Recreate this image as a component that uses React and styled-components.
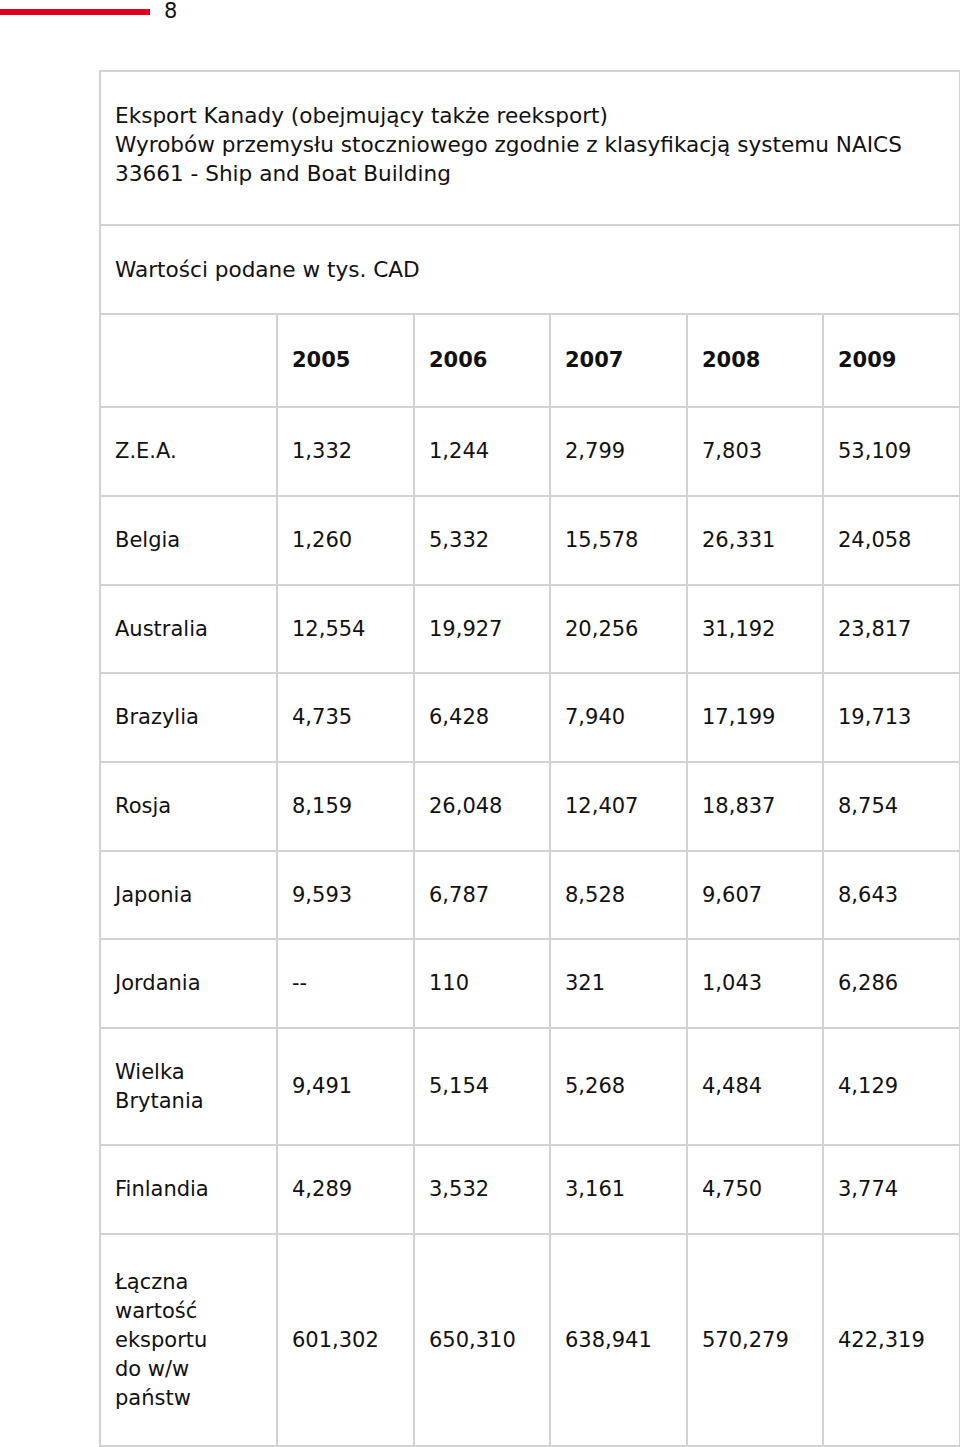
import React from "react";
import styled, { createGlobalStyle } from "styled-components";

const GlobalStyle = createGlobalStyle`
  html, body {
    margin: 0;
    padding: 0;
    background: #fff;
  }
  body {
    font-family: "DejaVu Sans", "Liberation Sans", sans-serif;
    color: #111;
  }
`;

const Page = styled.div`
  width: 960px;
  min-height: 1447px;
  box-sizing: border-box;
`;

const PageHeader = styled.div`
  display: flex;
  align-items: flex-start;
  gap: 14px;
  height: 70px;
`;

const RedBar = styled.div`
  width: 150px;
  height: 6px;
  margin-top: 9px;
  background: #e2001a;
`;

const PageNumber = styled.span`
  font-size: 21px;
  line-height: 22px;
`;

const Table = styled.table`
  margin-left: 99px;
  width: 860px;
  border-collapse: collapse;
  table-layout: fixed;
  font-size: 21px;
  line-height: 29px;
`;

const Row = styled.tr`
  height: ${(p) => p.h}px;
`;

const Cell = styled.td`
  border: 2px solid #d2d2d2;
  padding: 0 14px 0 14px;
  vertical-align: middle;
  text-align: left;
  white-space: nowrap;
  ${(p) => p.bold && "font-weight: 700;"}
  ${(p) => p.wide && "font-size: 21.6px;"}
  ${(p) => p.lift && "padding-bottom: 7px;"}
`;

const years = ["2005", "2006", "2007", "2008", "2009"];

const rows = [
  { name: "Z.E.A.", h: 89, v: ["1,332", "1,244", "2,799", "7,803", "53,109"] },
  { name: "Belgia", h: 89, v: ["1,260", "5,332", "15,578", "26,331", "24,058"] },
  { name: "Australia", h: 88, v: ["12,554", "19,927", "20,256", "31,192", "23,817"] },
  { name: "Brazylia", h: 89, v: ["4,735", "6,428", "7,940", "17,199", "19,713"] },
  { name: "Rosja", h: 89, v: ["8,159", "26,048", "12,407", "18,837", "8,754"] },
  { name: "Japonia", h: 88, v: ["9,593", "6,787", "8,528", "9,607", "8,643"] },
  { name: "Jordania", h: 89, v: ["--", "110", "321", "1,043", "6,286"] },
  { name: ["Wielka", "Brytania"], h: 117, v: ["9,491", "5,154", "5,268", "4,484", "4,129"] },
  { name: "Finlandia", h: 89, v: ["4,289", "3,532", "3,161", "4,750", "3,774"] },
  {
    name: ["Łączna", "wartość", "eksportu", "do w/w", "państw"],
    h: 212,
    v: ["601,302", "650,310", "638,941", "570,279", "422,319"],
  },
];

function Name({ value }) {
  if (!Array.isArray(value)) return value;
  return value.map((line, i) => (
    <React.Fragment key={i}>
      {i > 0 && <br />}
      {line}
    </React.Fragment>
  ));
}

export default function App() {
  return (
    <Page>
      <GlobalStyle />
      <PageHeader>
        <RedBar />
        <PageNumber>8</PageNumber>
      </PageHeader>
      <Table>
        <colgroup>
          <col style={{ width: 177 }} />
          <col style={{ width: 137 }} />
          <col style={{ width: 136 }} />
          <col style={{ width: 137 }} />
          <col style={{ width: 136 }} />
          <col style={{ width: 137 }} />
        </colgroup>
        <tbody>
          <Row h={154}>
            <Cell colSpan={6} wide lift>
              Eksport Kanady (obejmujący także reeksport)
              <br />
              Wyrobów przemysłu stoczniowego zgodnie z klasyfikacją systemu NAICS
              <br />
              33661 - Ship and Boat Building
            </Cell>
          </Row>
          <Row h={89}>
            <Cell colSpan={6} wide>
              Wartości podane w tys. CAD
            </Cell>
          </Row>
          <Row h={93}>
            <Cell />
            {years.map((y) => (
              <Cell key={y} bold>
                {y}
              </Cell>
            ))}
          </Row>
          {rows.map((r, i) => (
            <Row key={i} h={r.h}>
              <Cell>
                <Name value={r.name} />
              </Cell>
              {r.v.map((val, j) => (
                <Cell key={j}>{val}</Cell>
              ))}
            </Row>
          ))}
        </tbody>
      </Table>
    </Page>
  );
}
